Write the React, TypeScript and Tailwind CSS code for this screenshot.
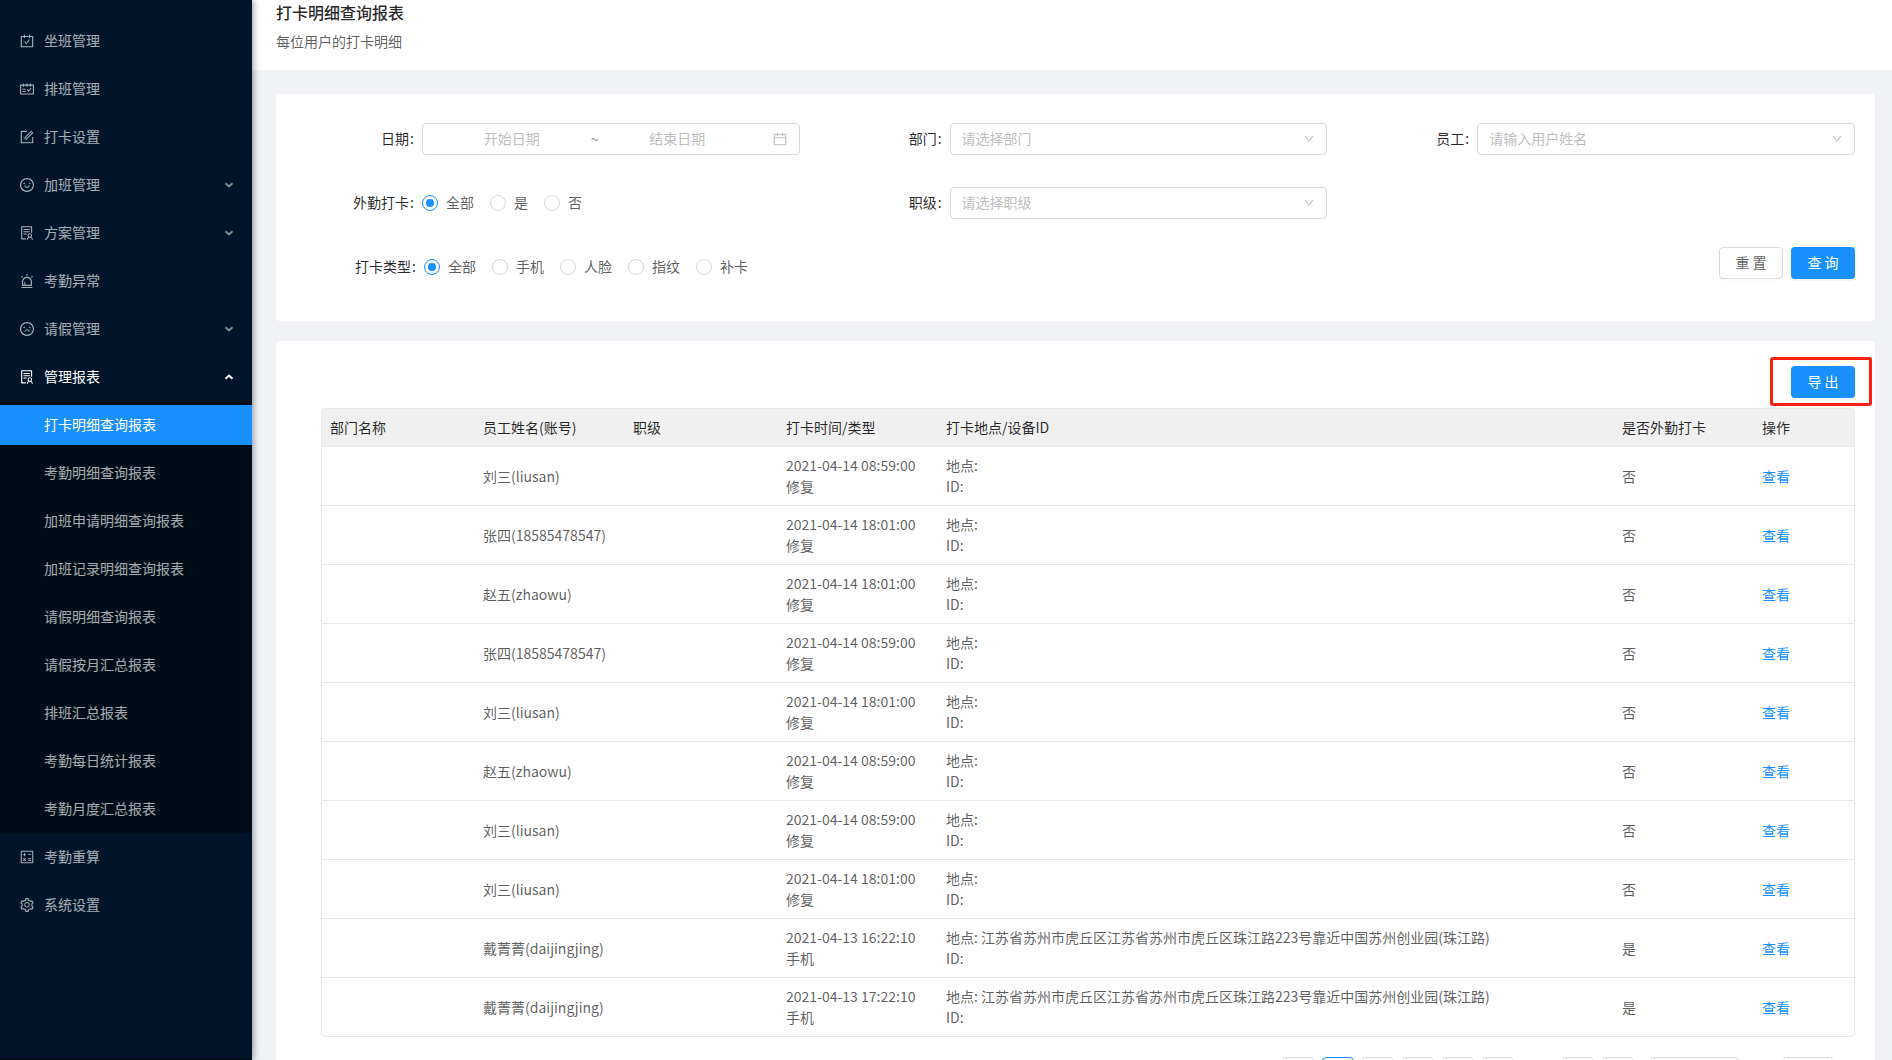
import type { ReactNode } from "react";
import type { IconType } from "react-icons";
import {
  AiOutlineAlert,
  AiOutlineCalculator,
  AiOutlineCalendar,
  AiOutlineCarryOut,
  AiOutlineDown,
  AiOutlineForm,
  AiOutlineFrown,
  AiOutlineLeft,
  AiOutlineRight,
  AiOutlineSchedule,
  AiOutlineSetting,
  AiOutlineSmile,
  AiOutlineSolution,
} from "react-icons/ai";

type MenuItem = {
  label: string;
  icon: IconType;
  expandable?: boolean;
  children?: string[];
};

const MENU: MenuItem[] = [
  { label: "坐班管理", icon: AiOutlineCarryOut },
  { label: "排班管理", icon: AiOutlineSchedule },
  { label: "打卡设置", icon: AiOutlineForm },
  { label: "加班管理", icon: AiOutlineSmile, expandable: true },
  { label: "方案管理", icon: AiOutlineSolution, expandable: true },
  { label: "考勤异常", icon: AiOutlineAlert },
  { label: "请假管理", icon: AiOutlineFrown, expandable: true },
  {
    label: "管理报表",
    icon: AiOutlineSolution,
    expandable: true,
    children: [
      "打卡明细查询报表",
      "考勤明细查询报表",
      "加班申请明细查询报表",
      "加班记录明细查询报表",
      "请假明细查询报表",
      "请假按月汇总报表",
      "排班汇总报表",
      "考勤每日统计报表",
      "考勤月度汇总报表",
    ],
  },
  { label: "考勤重算", icon: AiOutlineCalculator },
  { label: "系统设置", icon: AiOutlineSetting },
];

const ACTIVE = "打卡明细查询报表";

const ADDRESS =
  "江苏省苏州市虎丘区江苏省苏州市虎丘区珠江路223号靠近中国苏州创业园(珠江路)";

const ROWS = [
  { name: "刘三(liusan)", time: "2021-04-14 08:59:00", type: "修复", place: "", outside: "否" },
  { name: "张四(18585478547)", time: "2021-04-14 18:01:00", type: "修复", place: "", outside: "否" },
  { name: "赵五(zhaowu)", time: "2021-04-14 18:01:00", type: "修复", place: "", outside: "否" },
  { name: "张四(18585478547)", time: "2021-04-14 08:59:00", type: "修复", place: "", outside: "否" },
  { name: "刘三(liusan)", time: "2021-04-14 18:01:00", type: "修复", place: "", outside: "否" },
  { name: "赵五(zhaowu)", time: "2021-04-14 08:59:00", type: "修复", place: "", outside: "否" },
  { name: "刘三(liusan)", time: "2021-04-14 08:59:00", type: "修复", place: "", outside: "否" },
  { name: "刘三(liusan)", time: "2021-04-14 18:01:00", type: "修复", place: "", outside: "否" },
  { name: "戴菁菁(daijingjing)", time: "2021-04-13 16:22:10", type: "手机", place: ADDRESS, outside: "是" },
  { name: "戴菁菁(daijingjing)", time: "2021-04-13 17:22:10", type: "手机", place: ADDRESS, outside: "是" },
];

function Arrow({ open }: { open: boolean }) {
  return (
    <svg
      width="10"
      height="6"
      viewBox="0 0 10 6"
      fill="none"
      stroke="currentColor"
      strokeWidth="2"
      className={open ? "ml-auto text-white" : "ml-auto text-white/50"}
    >
      <path d={open ? "M1.5 4.7 5 1.5l3.5 3.2" : "M1.5 1.3 5 4.5l3.5-3.2"} />
    </svg>
  );
}

function Sidebar() {
  return (
    <aside className="z-10 flex w-[252px] shrink-0 flex-col bg-[#001529] pt-[17px] text-white/65 shadow-[2px_0_6px_rgba(0,21,41,0.35)]">
      <nav>
        <ul>
          {MENU.map(({ label, icon: Icon, expandable, children }) => (
            <li key={label}>
              {expandable ? (
                <button
                  type="button"
                  aria-expanded={!!children}
                  className={`flex h-12 w-full items-center gap-[9px] pr-[18px] pl-[19px] ${
                    children ? "text-white" : "hover:text-white"
                  }`}
                >
                  <Icon size={16} />
                  <span className="pb-0.5">{label}</span>
                  <Arrow open={!!children} />
                </button>
              ) : (
                <a
                  href="#"
                  className="flex h-12 items-center gap-[9px] pr-[18px] pl-[19px] hover:text-white"
                >
                  <Icon size={16} />
                  <span className="pb-0.5">{label}</span>
                </a>
              )}
              {children && (
                <ul className="bg-[#000c17]">
                  {children.map((child) => (
                    <li key={child} className="py-1">
                      <a
                        href="#"
                        className={`flex h-10 items-center pb-0.5 pl-11 ${
                          child === ACTIVE ? "bg-[#1890ff] text-white" : "hover:text-white"
                        }`}
                      >
                        {child}
                      </a>
                    </li>
                  ))}
                </ul>
              )}
            </li>
          ))}
        </ul>
      </nav>
      <div className="mt-auto h-0.5 bg-[#000c17]" />
    </aside>
  );
}

function Field({
  label,
  htmlFor,
  wide,
  children,
}: {
  label: string;
  htmlFor?: string;
  wide?: boolean;
  children: ReactNode;
}) {
  return (
    <div className="flex h-10 items-center">
      <div
        className={`shrink-0 pr-2 pb-0.5 text-right text-black/85 ${wide ? "w-1/6" : "w-1/4"}`}
      >
        {htmlFor ? <label htmlFor={htmlFor}>{label}</label> : <span>{label}</span>}
        <span className="ml-px">:</span>
      </div>
      <div className="min-w-0 flex-1">{children}</div>
    </div>
  );
}

function SelectBox({ id, placeholder }: { id: string; placeholder: string }) {
  return (
    <div className="relative">
      <select
        id={id}
        className="block h-8 w-full appearance-none rounded border border-[#d9d9d9] bg-white px-[11px] pb-0.5 text-[#bfbfbf] outline-none hover:border-[#40a9ff]"
      >
        <option>{placeholder}</option>
      </select>
      <AiOutlineDown
        size={12}
        className="pointer-events-none absolute top-2.5 right-3 text-[#bfbfbf]"
      />
    </div>
  );
}

function RadioGroup({ name, label, options }: { name: string; label: string; options: string[] }) {
  return (
    <div role="radiogroup" aria-label={label} className="flex gap-4">
      {options.map((option, i) => (
        <label key={option} className="flex items-center gap-2">
          <input
            type="radio"
            name={name}
            defaultChecked={i === 0}
            className="grid size-4 appearance-none place-items-center rounded-full border border-[#d9d9d9] bg-white before:size-2 before:rounded-full checked:border-[#1890ff] checked:before:bg-[#1890ff]"
          />
          <span className="pb-0.5">{option}</span>
        </label>
      ))}
    </div>
  );
}

function PrimaryButton({ children }: { children: ReactNode }) {
  return (
    <button
      type="button"
      className="block h-8 w-16 rounded bg-[#1890ff] pb-0.5 text-white shadow-[0_2px_0_rgba(0,0,0,0.045)] hover:bg-[#40a9ff]"
    >
      {children}
    </button>
  );
}

function FilterCard() {
  return (
    <form className="mt-6 rounded bg-white px-5 pt-[25px] pb-[34px]">
      <div className="grid grid-cols-3 gap-6">
        <Field label="日期" htmlFor="start-date">
          <div className="flex h-8 items-center rounded border border-[#d9d9d9] px-[11px]">
            <input
              id="start-date"
              placeholder="开始日期"
              className="w-[44%] pb-0.5 text-center outline-none placeholder:text-[#bfbfbf]"
            />
            <span className="w-2.5 text-center text-black/45">~</span>
            <input
              aria-label="结束日期"
              placeholder="结束日期"
              className="w-[44%] pb-0.5 text-center outline-none placeholder:text-[#bfbfbf]"
            />
            <AiOutlineCalendar size={16} className="ml-auto shrink-0 text-[#bfbfbf]" />
          </div>
        </Field>
        <Field label="部门" htmlFor="department">
          <SelectBox id="department" placeholder="请选择部门" />
        </Field>
        <Field label="员工" htmlFor="employee">
          <SelectBox id="employee" placeholder="请输入用户姓名" />
        </Field>
        <Field label="外勤打卡">
          <RadioGroup name="outside" label="外勤打卡" options={["全部", "是", "否"]} />
        </Field>
        <Field label="职级" htmlFor="rank">
          <SelectBox id="rank" placeholder="请选择职级" />
        </Field>
      </div>
      <div className="mt-6 grid grid-cols-2 gap-6">
        <Field label="打卡类型" wide>
          <RadioGroup
            name="type"
            label="打卡类型"
            options={["全部", "手机", "人脸", "指纹", "补卡"]}
          />
        </Field>
        <div className="flex items-start justify-end gap-2">
          <button
            type="reset"
            className="h-8 w-16 rounded border border-[#d9d9d9] bg-white pb-0.5 shadow-[0_2px_0_rgba(0,0,0,0.015)] hover:text-[#40a9ff]"
          >
            重 置
          </button>
          <PrimaryButton>查 询</PrimaryButton>
        </div>
      </div>
    </form>
  );
}

function RecordTable() {
  return (
    <div className="mt-2.5 overflow-hidden rounded border border-b-0 border-[#e8e8e8]">
      <table className="w-full table-fixed border-separate border-spacing-0 text-left leading-[21px] [&_td]:border-b [&_td]:border-[#e8e8e8] [&_td]:p-2 [&_th]:border-b [&_th]:border-[#e8e8e8] [&_th]:p-2 [&_th]:font-normal">
        <colgroup>
          <col className="w-[153px]" />
          <col className="w-[150px]" />
          <col className="w-[153px]" />
          <col className="w-40" />
          <col />
          <col className="w-[140px]" />
          <col className="w-[100px]" />
        </colgroup>
        <thead className="bg-[#f0f0f0] text-black/85">
          <tr>
            <th>部门名称</th>
            <th>员工姓名(账号)</th>
            <th>职级</th>
            <th>打卡时间/类型</th>
            <th>打卡地点/设备ID</th>
            <th>是否外勤打卡</th>
            <th>操作</th>
          </tr>
        </thead>
        <tbody className="[&>tr:last-child>td:first-child]:rounded-bl [&>tr:last-child>td:last-child]:rounded-br">
          {ROWS.map((row, i) => (
            <tr key={i} className="hover:bg-[#e6f7ff]">
              <td />
              <td>{row.name}</td>
              <td />
              <td>
                <div>{row.time}</div>
                <div>{row.type}</div>
              </td>
              <td>
                <div>地点: {row.place}</div>
                <div>ID:</div>
              </td>
              <td>{row.outside}</td>
              <td>
                <a href="#" className="text-[#1890ff]">
                  查看
                </a>
              </td>
            </tr>
          ))}
        </tbody>
      </table>
    </div>
  );
}

function PageButton({ label, active, children }: { label: string; active?: boolean; children: ReactNode }) {
  return (
    <button
      type="button"
      aria-label={label}
      className={`flex size-8 items-center justify-center rounded border bg-white ${
        active ? "border-[#1890ff] text-[#1890ff]" : "border-[#d9d9d9]"
      }`}
    >
      {children}
    </button>
  );
}

function Pagination() {
  return (
    <div className="mt-5 flex items-center justify-end gap-2">
      <PageButton label="上一页">
        <AiOutlineLeft size={12} />
      </PageButton>
      {[1, 2, 3, 4, 5].map((n) => (
        <PageButton key={n} label={`第 ${n} 页`} active={n === 1}>
          {n}
        </PageButton>
      ))}
      <span className="w-8 text-center">•••</span>
      <PageButton label="最后一页">50</PageButton>
      <PageButton label="下一页">
        <AiOutlineRight size={12} />
      </PageButton>
      <select
        aria-label="每页条数"
        className="ml-2 h-8 w-[89px] appearance-none rounded border border-[#d9d9d9] bg-white px-[11px]"
      >
        <option>10 条/页</option>
      </select>
      <label className="flex items-center gap-2">
        跳至
        <input className="h-8 w-[50px] rounded border border-[#d9d9d9] px-2" />
        页
      </label>
    </div>
  );
}

export default function App() {
  return (
    <div className="flex h-screen overflow-hidden bg-[#f0f2f5] font-['Noto_Sans_CJK_SC',sans-serif] text-sm text-black/65">
      <Sidebar />
      <main className="min-w-0 flex-1 overflow-y-auto [scrollbar-width:none]">
        <header className="bg-white px-6 pb-[18px]">
          <h1 className="text-base leading-6 font-medium text-black/85">打卡明细查询报表</h1>
          <p className="mt-1.5 leading-[22px]">每位用户的打卡明细</p>
        </header>
        <div className="pr-[17px] pl-6">
          <FilterCard />
          <section className="mt-5 rounded bg-white pt-[25px] pr-5 pb-6 pl-[45px]">
            <div className="flex justify-end">
              <div className="relative">
                <PrimaryButton>导 出</PrimaryButton>
                <div className="pointer-events-none absolute -top-[9px] -right-[17px] -bottom-2 -left-[21px] rounded-[3px] border-3 border-[#ff1e10]" />
              </div>
            </div>
            <RecordTable />
            <Pagination />
          </section>
        </div>
      </main>
    </div>
  );
}
